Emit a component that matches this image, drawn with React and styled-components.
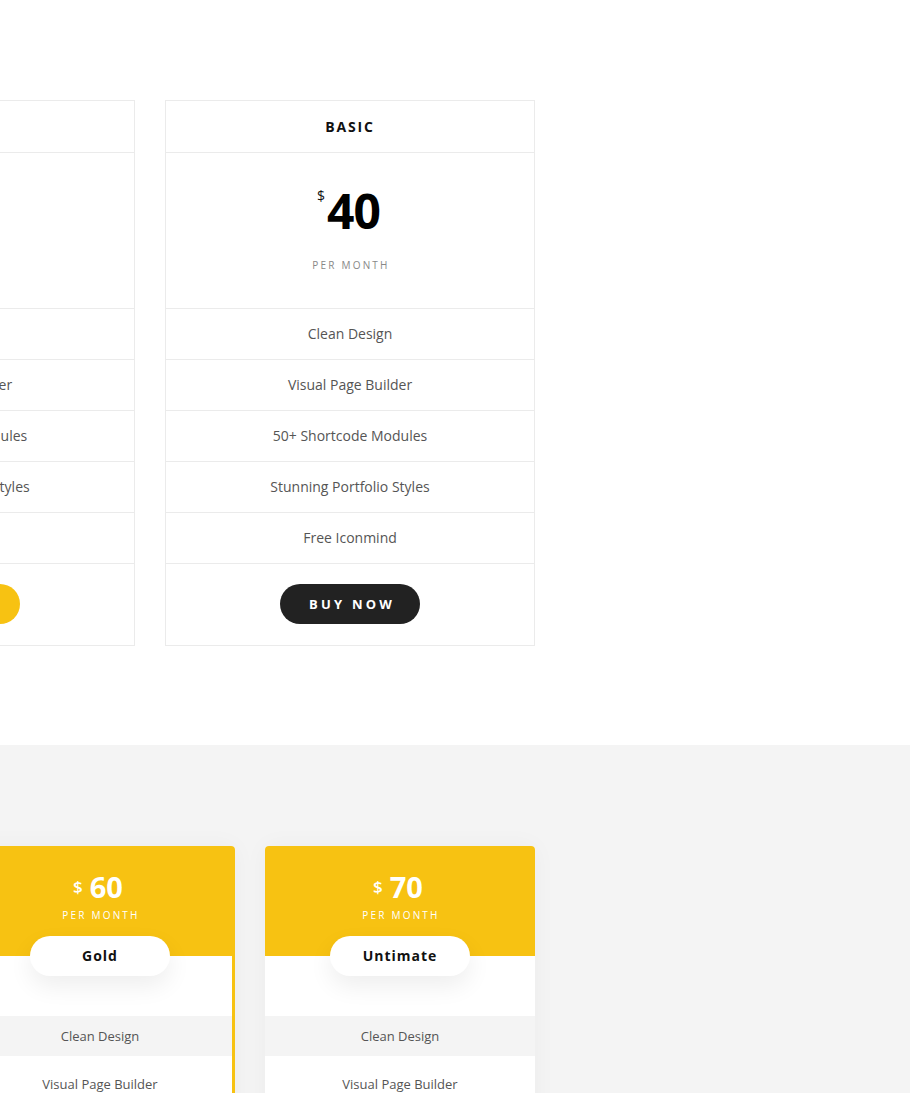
import React from "react";
import styled, { createGlobalStyle } from "styled-components";

const Global = createGlobalStyle`
  html, body { margin: 0; padding: 0; overflow: hidden; background: #fff; }
  body { font-family: "Open Sans", "Liberation Sans", Arial, sans-serif; -webkit-font-smoothing: antialiased; }
  * { box-sizing: border-box; }
`;

const YELLOW = "#f7c212";
const LINE = "#ebebeb";

const WhiteSection = styled.section`
  background: #fff;
  padding: 100px 0 99px;
`;

const GreySection = styled.section`
  background: #f4f4f4;
  padding: 101px 0 80px;
`;

const Row = styled.div`
  display: flex;
  gap: 30px;
  margin-left: ${(p) => p.$offset}px;
`;

/* ---------- Classic table ---------- */
const ClassicCard = styled.div`
  width: 370px;
  flex: 0 0 370px;
  border: 1px solid ${LINE};
  background: #fff;
  text-align: center;
`;

const ClassicHeader = styled.div`
  height: 52px;
  border-bottom: 1px solid ${LINE};
  display: flex;
  align-items: center;
  justify-content: center;
  font-size: 14px;
  font-weight: 700;
  letter-spacing: 1.8px;
  color: #111;
`;

const ClassicPrice = styled.div`
  height: 156px;
  border-bottom: 1px solid ${LINE};
  padding-top: 30px;
  display: flex;
  flex-direction: column;
  align-items: center;
`;

const PriceLine = styled.div`
  display: flex;
  align-items: flex-start;
  justify-content: center;
  height: 56px;
  padding-right: 3px;
`;

const Currency = styled.span`
  font-size: 14px;
  line-height: 14px;
  margin-top: 6px;
  margin-right: 2px;
  color: #111;
`;

const Amount = styled.span`
  font-size: 48px;
  line-height: 56px;
  font-weight: 700;
  color: #000;
  letter-spacing: -1px;
`;

const Period = styled.div`
  margin-top: 18px;
  font-size: 10px;
  line-height: 16px;
  letter-spacing: 2.2px;
  color: #888;
  text-transform: uppercase;
  padding-left: 2px;
`;

const ClassicFeature = styled.div`
  height: 51px;
  padding-bottom: 1px;
  border-bottom: 1px solid ${LINE};
  display: flex;
  align-items: center;
  justify-content: center;
  font-size: 14px;
  color: #555;
`;

const ClassicFooter = styled.div`
  padding: 20px 0 21px;
  display: flex;
  justify-content: center;
`;

const BuyButton = styled.button`
  width: 140px;
  height: 40px;
  border: 0;
  border-radius: 20px;
  background: ${(p) => (p.$accent ? YELLOW : "#222")};
  color: #fff;
  font-family: inherit;
  font-size: 13px;
  font-weight: 700;
  letter-spacing: 3.2px;
  padding: 0 0 1px 4px;
  text-transform: uppercase;
  cursor: pointer;
`;

/* ---------- Modern table ---------- */
const ModernCard = styled.div`
  width: 270px;
  flex: 0 0 270px;
  background: #fff;
  border-radius: 4px 4px 0 0;
  box-shadow: 0 0 24px rgba(0, 0, 0, 0.04);
  text-align: center;
`;

const ModernHeader = styled.div`
  background: ${YELLOW};
  border-radius: 4px 4px 0 0;
  padding-top: 22px;
  display: flex;
  flex-direction: column;
  align-items: center;
  position: relative;
  z-index: 1;
`;

const ModernPriceLine = styled.div`
  display: flex;
  align-items: center;
  justify-content: center;
  gap: 7px;
  height: 36px;
  padding-right: 4px;
  color: #fff;
`;

const ModernCurrency = styled.span`
  font-size: 17px;
  font-weight: 600;
`;

const ModernAmount = styled.span`
  font-size: 29px;
  font-weight: 700;
`;

const ModernPeriod = styled.div`
  margin-top: 3px;
  font-size: 10px;
  line-height: 16px;
  letter-spacing: 2.2px;
  color: #fff;
  padding-left: 2px;
`;

const PlanPill = styled.div`
  margin-top: 13px;
  margin-bottom: -20px;
  width: 140px;
  height: 40px;
  padding-bottom: 2px;
  border-radius: 20px;
  background: #fff;
  box-shadow: 0 10px 24px rgba(0, 0, 0, 0.07);
  display: flex;
  align-items: center;
  justify-content: center;
  font-size: 14px;
  font-weight: 700;
  letter-spacing: 1px;
  color: #111;
`;

const ModernBody = styled.div`
  padding-top: 60px;
  display: flex;
  flex-direction: column;
  gap: 8px;
  border: ${(p) => (p.$active ? `3px solid ${YELLOW}` : "0")};
  border-top: 0;
`;

const ModernFeature = styled.div`
  height: 40px;
  display: flex;
  align-items: center;
  justify-content: center;
  font-size: 13px;
  color: #555;
  background: ${(p) => (p.$shaded ? "#f4f4f4" : "#fff")};
`;

const features = [
  "Clean Design",
  "Visual Page Builder",
  "50+ Shortcode Modules",
  "Stunning Portfolio Styles",
  "Free Iconmind",
];

const classicPlans = [
  { name: "STANDARD", price: "20", accent: true },
  { name: "BASIC", price: "40", accent: false },
];

const modernPlans = [
  { name: "Gold", price: "60", active: true },
  { name: "Untimate", price: "70", active: false },
];

export default function App() {
  return (
    <>
      <Global />
      <WhiteSection>
        <Row $offset={-235}>
          {classicPlans.map((p) => (
            <ClassicCard key={p.name}>
              <ClassicHeader>{p.name}</ClassicHeader>
              <ClassicPrice>
                <PriceLine>
                  <Currency>$</Currency>
                  <Amount>{p.price}</Amount>
                </PriceLine>
                <Period>Per Month</Period>
              </ClassicPrice>
              {features.map((f) => (
                <ClassicFeature key={f}>{f}</ClassicFeature>
              ))}
              <ClassicFooter>
                <BuyButton $accent={p.accent}>Buy Now</BuyButton>
              </ClassicFooter>
            </ClassicCard>
          ))}
        </Row>
      </WhiteSection>
      <GreySection>
        <Row $offset={-35}>
          {modernPlans.map((p) => (
            <ModernCard key={p.name}>
              <ModernHeader>
                <ModernPriceLine>
                  <ModernCurrency>$</ModernCurrency>
                  <ModernAmount>{p.price}</ModernAmount>
                </ModernPriceLine>
                <ModernPeriod>PER MONTH</ModernPeriod>
                <PlanPill>{p.name}</PlanPill>
              </ModernHeader>
              <ModernBody $active={p.active}>
                {features.map((f, i) => (
                  <ModernFeature key={f} $shaded={i % 2 === 0}>
                    {f}
                  </ModernFeature>
                ))}
              </ModernBody>
            </ModernCard>
          ))}
        </Row>
      </GreySection>
    </>
  );
}
